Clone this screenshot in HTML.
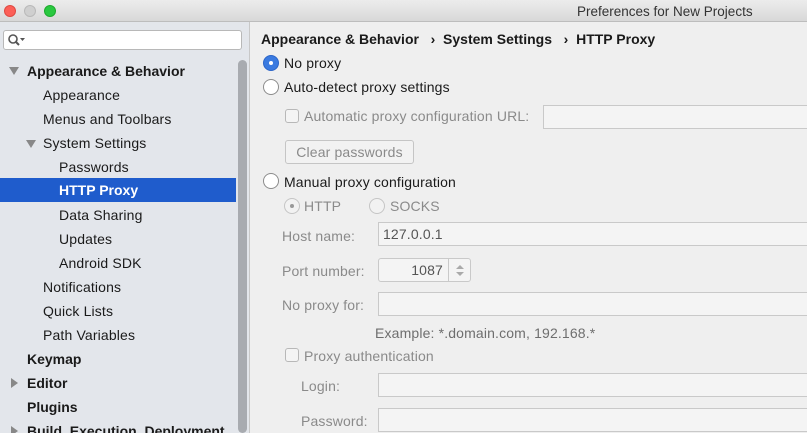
<!DOCTYPE html>
<html><head><style>
*{margin:0;padding:0;box-sizing:border-box}
html,body{width:807px;height:433px;overflow:hidden}
body{font-family:"Liberation Sans",sans-serif;font-size:14px;letter-spacing:0.15px;color:#1a1a1a;background:#efefef;position:relative}
.abs{position:absolute;white-space:nowrap}
#title{left:0;top:0;width:807px;height:22px;background:linear-gradient(#ececec,#d8d8d8);border-bottom:1px solid #bdbdbd}
.dot{position:absolute;top:5px;width:12px;height:12px;border-radius:50%}
#side{left:0;top:22px;width:250px;height:411px;background:#e3e6eb;border-right:1px solid #c8c8c8}
.it{position:absolute;left:0;width:236px;height:24px;line-height:24px;white-space:nowrap}
.b{font-weight:bold;letter-spacing:0}
.tri{position:absolute;width:0;height:0}
.f{position:absolute;background:#f4f4f4;border:1px solid #c9c9c9;height:24px}
.g{color:#8a8a8a}
.rad{position:absolute;width:16px;height:16px;border-radius:50%;background:#fff;border:1px solid #8c8c8c}
.cb{position:absolute;width:14px;height:14px;border-radius:3px;border:1px solid #b8b8b8;background:#f4f4f4}
</style></head><body>
<div class="abs" id="title">
<div class="dot" style="left:4px;background:#fc5f57;border:1px solid #de4a42"></div>
<div class="dot" style="left:24px;background:#cfcfcf;border:1px solid #b9b9b9"></div>
<div class="dot" style="left:44px;background:#2ac840;border:1px solid #1eaa2e"></div>
<div class="abs" style="left:577px;top:4px;color:#333;font-size:13.5px;letter-spacing:0">Preferences for New Projects</div>
</div>
<div class="abs" id="side">
<div class="abs" style="left:3px;top:8px;width:239px;height:20px;background:#fff;border:1px solid #b8b8b8;border-radius:3px">
<svg width="24" height="16" style="position:absolute;left:3px;top:2px"><circle cx="6" cy="6" r="4" fill="none" stroke="#555" stroke-width="1.6"/><line x1="9" y1="9" x2="12" y2="12" stroke="#555" stroke-width="2"/><path d="M13 5h5l-2.5 3z" fill="#555"/></svg>
</div>
<div class="abs" style="left:238px;top:38px;width:9px;height:373px;background:#a8abb0;border-radius:5px"></div>
</div>
<div class="tri" style="left:9px;top:67px;border-left:5px solid transparent;border-right:5px solid transparent;border-top:8px solid #888"></div>
<div class="it b" style="top:59px;padding-left:27px">Appearance &amp; Behavior</div>
<div class="it" style="top:83px;padding-left:43px">Appearance</div>
<div class="it" style="top:107px;padding-left:43px">Menus and Toolbars</div>
<div class="tri" style="left:26px;top:140px;border-left:5px solid transparent;border-right:5px solid transparent;border-top:8px solid #888"></div>
<div class="it" style="top:131px;padding-left:43px">System Settings</div>
<div class="it" style="top:155px;padding-left:59px">Passwords</div>
<div class="it b" style="top:178px;padding-left:59px;background:#1f5ccc;color:#fff;line-height:25px">HTTP Proxy</div>
<div class="it" style="top:203px;padding-left:59px">Data Sharing</div>
<div class="it" style="top:227px;padding-left:59px">Updates</div>
<div class="it" style="top:251px;padding-left:59px">Android SDK</div>
<div class="it" style="top:275px;padding-left:43px">Notifications</div>
<div class="it" style="top:299px;padding-left:43px">Quick Lists</div>
<div class="it" style="top:323px;padding-left:43px">Path Variables</div>
<div class="it b" style="top:347px;padding-left:27px">Keymap</div>
<div class="tri" style="left:11px;top:378px;border-top:5px solid transparent;border-bottom:5px solid transparent;border-left:7px solid #888"></div>
<div class="it b" style="top:371px;padding-left:27px">Editor</div>
<div class="it b" style="top:395px;padding-left:27px">Plugins</div>
<div class="tri" style="left:11px;top:426px;border-top:5px solid transparent;border-bottom:5px solid transparent;border-left:7px solid #888"></div>
<div class="it b" style="top:419px;padding-left:27px">Build, Execution, Deployment</div>

<div class="abs b" style="left:261px;top:31px">Appearance &amp; Behavior &nbsp; › &nbsp;System Settings &nbsp; › &nbsp;HTTP Proxy</div>
<div class="rad" style="left:263px;top:55px;background:#3a7ae0;border-color:#2c66c8"><div style="position:absolute;left:5px;top:5px;width:4px;height:4px;border-radius:50%;background:#fff"></div></div>
<div class="abs" style="left:284px;top:55px">No proxy</div>
<div class="rad" style="left:263px;top:79px"></div>
<div class="abs" style="left:284px;top:79px">Auto-detect proxy settings</div>
<div class="cb" style="left:285px;top:109px"></div>
<div class="abs g" style="left:304px;top:108px">Automatic proxy configuration URL:</div>
<div class="f" style="left:543px;top:105px;width:270px"></div>
<div class="abs g" style="left:285px;top:140px;width:129px;height:24px;border:1px solid #c5c5c5;border-radius:3px;background:#f2f2f2;text-align:center;line-height:22px">Clear passwords</div>
<div class="rad" style="left:263px;top:173px"></div>
<div class="abs" style="left:284px;top:174px">Manual proxy configuration</div>
<div class="rad" style="left:284px;top:198px;border-color:#c5c5c5;background:#f2f2f2"><div style="position:absolute;left:5px;top:5px;width:4px;height:4px;border-radius:50%;background:#999"></div></div>
<div class="abs g" style="left:304px;top:198px">HTTP</div>
<div class="rad" style="left:369px;top:198px;border-color:#c5c5c5;background:#f2f2f2"></div>
<div class="abs g" style="left:390px;top:198px">SOCKS</div>
<div class="abs g" style="left:282px;top:228px">Host name:</div>
<div class="f" style="left:378px;top:222px;width:435px;padding-left:4px;line-height:22px;color:#555">127.0.0.1</div>
<div class="abs g" style="left:282px;top:263px">Port number:</div>
<div class="f" style="left:378px;top:258px;width:93px;border-radius:3px;line-height:22px;color:#555"><span style="position:absolute;right:27px">1087</span><div style="position:absolute;right:0;top:0;width:22px;height:22px;border-left:1px solid #c9c9c9"><svg width="22" height="22"><path d="M7 10l4-4 4 4zM7 13l4 4 4-4z" fill="#aaa"/></svg></div></div>
<div class="abs g" style="left:282px;top:297px">No proxy for:</div>
<div class="f" style="left:378px;top:292px;width:435px"></div>
<div class="abs" style="left:375px;top:325px;color:#6e6e6e">Example: *.domain.com, 192.168.*</div>
<div class="cb" style="left:285px;top:348px"></div>
<div class="abs g" style="left:304px;top:348px">Proxy authentication</div>
<div class="abs g" style="left:301px;top:378px">Login:</div>
<div class="f" style="left:378px;top:373px;width:435px"></div>
<div class="abs g" style="left:301px;top:413px">Password:</div>
<div class="f" style="left:378px;top:408px;width:435px"></div>
</body></html>
